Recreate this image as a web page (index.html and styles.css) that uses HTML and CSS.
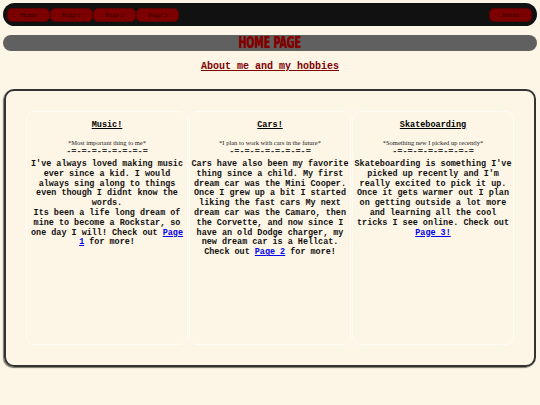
FILE: index.html
```html
<!DOCTYPE html>
<html>
<head>
<meta charset="utf-8">
<link rel="stylesheet" href="styles.css">
</head>
<body>
<nav class="nav">
  <a class="btn" href="#">Home</a>
  <a class="btn" href="#">Page 1</a>
  <a class="btn" href="#">Page 2</a>
  <a class="btn" href="#">Page 3</a>
  <a class="btn about" href="#">About</a>
</nav>
<div class="banner"><span class="banner-text">HOME PAGE</span></div>
<p class="intro"><a href="#">About me and my hobbies</a></p>
<main class="box">
  <section class="card">
    <h3 class="title">Music!</h3>
    <p class="sub">*Most important thing to me*</p>
    <p class="dash">-=-=-=-=-=-=-=-=</p>
    <p class="body">I've always loved making music ever since a kid. I would always sing along to things even though I didnt know the words.<br>Its been a life long dream of mine to become a Rockstar, so one day I will! Check out <a href="#">Page 1</a> for more!</p>
  </section>
  <section class="card">
    <h3 class="title">Cars!</h3>
    <p class="sub">*I plan to work with cars in the future*</p>
    <p class="dash">-=-=-=-=-=-=-=-=</p>
    <p class="body">Cars have also been my favorite thing since a child. My first dream car was the Mini Cooper. Once I grew up a bit I started liking the fast cars My next dream car was the Camaro, then the Corvette, and now since I have an old Dodge charger, my new dream car is a Hellcat. Check out <a href="#">Page 2</a> for more!</p>
  </section>
  <section class="card">
    <h3 class="title">Skateboarding</h3>
    <p class="sub">*Something new I picked up recently*</p>
    <p class="dash">-=-=-=-=-=-=-=-=</p>
    <p class="body">Skateboarding is something I've picked up recently and I'm really excited to pick it up. Once it gets warmer out I plan on getting outside a lot more and learning all the cool tricks I see online. Check out <a href="#">Page 3!</a></p>
  </section>
</main>
</body>
</html>
```

FILE: styles.css
```css
html, body {
  margin: 0;
  background: #fdf5e6;
}
body {
  padding: 3px;
  font-family: "Liberation Mono", monospace;
}
.nav {
  height: 23px;
  box-sizing: border-box;
  background: #111;
  border-radius: 12px;
  display: flex;
  align-items: center;
  padding: 0 5px 0 4px;
}
.btn {
  width: 43px;
  height: 14px;
  box-sizing: border-box;
  border-radius: 5px;
  background: #7c0000;
  border: 1px solid #5a0000;
  color: #2a0000;
  font-family: "Liberation Serif", serif;
  font-size: 7px;
  line-height: 12px;
  text-align: center;
  text-decoration: none;
}
.about {
  margin-left: auto;
}
.banner {
  margin-top: 9px;
  height: 16px;
  background: #606060;
  border-radius: 8px;
  text-align: center;
  overflow: hidden;
}
.banner-text {
  display: inline-block;
  font-family: "DejaVu Sans Condensed", "DejaVu Sans", sans-serif;
  font-weight: bold;
  font-size: 15px;
  line-height: 16px;
  color: #800000;
  text-shadow: 0 0 1px #800000;
  transform: scaleX(0.7);
}
.intro {
  margin: 10px 0 0;
  text-align: center;
  font-size: 10px;
  line-height: 12px;
  font-weight: bold;
}
.intro a {
  color: #800000;
}
.box {
  margin: 16px 1px 0;
  border: 2px solid #333;
  border-radius: 10px;
  box-shadow: -1px 1px 1px #776;
  padding: 20px;
  display: grid;
  grid-template-columns: 1fr 1fr 1fr;
  gap: 1px;
}
.card {
  height: 234px;
  box-sizing: border-box;
  border: 1px solid #fffcf6;
  border-radius: 8px;
  padding: 8px 0 0;
  text-align: center;
}
.title {
  margin: 0;
  font-size: 8.5px;
  line-height: 10px;
  font-weight: bold;
  text-decoration: underline;
}
.sub {
  margin: 9px 0 0;
  font-family: "Liberation Serif", serif;
  font-size: 6.5px;
  line-height: 8px;
  color: #222;
}
.dash {
  margin: 0;
  font-size: 8.5px;
  line-height: 10px;
  font-weight: bold;
  color: #333;
}
.body {
  margin: 3px 0 0;
  font-size: 8.45px;
  line-height: 9.8px;
  font-weight: bold;
  color: #111;
}
.body a {
  color: #0000ee;
}
```
